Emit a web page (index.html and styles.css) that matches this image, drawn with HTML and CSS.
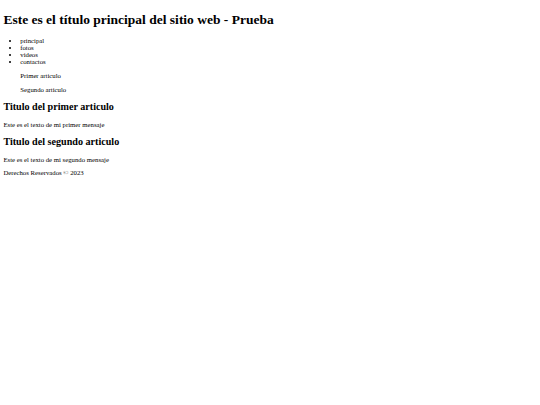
FILE: index.html
```html
<!DOCTYPE html>
<html lang="es">
<head>
<meta charset="utf-8">
<title>Prueba</title>
<link rel="stylesheet" href="styles.css">
</head>
<body class="page">
<header class="site-header">
<h1 class="site-title">Este es el título principal del sitio web - Prueba</h1>
<nav class="site-nav">
<ul class="nav-list">
<li>principal</li>
<li>fotos</li>
<li>videos</li>
<li>contactos</li>
</ul>
</nav>
</header>
<aside class="article-links">
<p>Primer articulo</p>
<p>Segundo articulo</p>
</aside>
<main class="content">
<article class="post">
<h2 class="post-title">Titulo del primer articulo</h2>
<p>Este es el texto de mi primer mensaje</p>
</article>
<article class="post">
<h2 class="post-title">Titulo del segundo articulo</h2>
<p>Este es el texto de mi segundo mensaje</p>
</article>
</main>
<footer class="site-footer">
<p>Derechos Reservados © 2023</p>
</footer>
</body>
</html>
```
FILE: styles.css
```css
html {
  background: #fff;
}
.page {
  margin: 3.375px;
  font-family: "Liberation Serif", "Times New Roman", serif;
  font-size: 6.75px;
  color: #000;
}
.site-title {
  font-size: 13.5px;
  margin: 9.045px 0;
}
.nav-list {
  margin: 6.75px 0;
  padding-left: 16.875px;
}
.article-links {
  margin: 6.75px 16.875px;
}
.article-links p {
  margin: 6.75px 0;
}
.post-title {
  font-size: 10.125px;
  margin: 8.404px 0;
}
.post p,
.site-footer p {
  margin: 6.75px 0;
}
```
